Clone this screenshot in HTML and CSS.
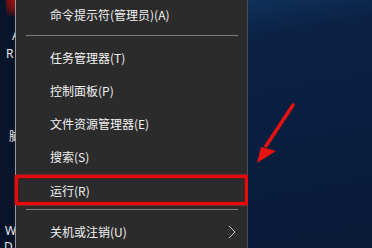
FILE: index.html
```html
<!DOCTYPE html>
<html lang="zh-CN">
<head>
  <meta charset="UTF-8" />
  <meta name="viewport" content="width=device-width, initial-scale=1.0"/>
  <title>Win+X</title>
  <link rel="stylesheet" href="styles.css">
</head>

<body>
  <div class="screen">
    <div class="desk-left">
      <span class="glow"></span>
      <span class="lbl l1">A</span>
      <span class="lbl l2">R</span>
      <span class="lbl l3">脑</span>
      <span class="lbl l4">W</span>
      <span class="lbl l5">D</span>
    </div>

    <ul class="menu">
      <li class="item first">命令提示符(管理员)(A)</li>
      <li class="sep"></li>
      <li class="item">任务管理器(T)</li>
      <li class="item">控制面板(P)</li>
      <li class="item">文件资源管理器(E)</li>
      <li class="item">搜索(S)</li>
      <li class="item run">运行(R)</li>
      <li class="sep sep2"></li>
      <li class="item sub">关机或注销(U)
        <svg class="chev" width="8" height="14" viewBox="0 0 8 14">
          <path d="M1 1 L7 7 L1 13" fill="none" stroke="#cfcfcf" stroke-width="1"/>
        </svg>
      </li>
    </ul>

    <div class="desk-right">
      <svg class="arrow" width="45" height="80" viewBox="0 0 45 80">
        <line x1="36" y1="15" x2="9" y2="56" stroke="#e5120f" stroke-width="3.5" stroke-linecap="round"/>
        <polygon points="0,73 4,57 19,61" fill="#e5120f"/>
      </svg>
    </div>
  </div>
</body>
</html>
```

FILE: styles.css
```css
* {
  box-sizing: border-box;
}

body {
  margin: 0;
  padding: 0;
  background: #081a36;
  font-family: "Noto Sans CJK SC", "Noto Sans", sans-serif;
}

.screen {
  width: 372px;
  height: 248px;
  display: flex;
  overflow: hidden;
}

.desk-left {
  position: relative;
  width: 15px;
  flex: none;
  background: #08142a;
  overflow: hidden;
}

.glow {
  position: absolute;
  top: 0;
  left: 6px;
  width: 12px;
  height: 16px;
  background: radial-gradient(circle at 100% 0, #b01818 0, #701010 50%, rgba(8, 20, 42, 0) 100%);
}

.lbl {
  position: absolute;
  color: #e8e8e8;
  font-family: "Noto Sans", sans-serif;
  font-size: 12px;
  line-height: 13px;
}

.l1 { left: 12px; top: 29px; }
.l2 { left: 6px; top: 47px; }
.l3 { left: 9px; top: 129px; font-family: "Noto Sans CJK SC", sans-serif; }
.l4 { left: 5px; top: 224px; }
.l5 { left: 4px; top: 240px; }

.menu {
  width: 233px;
  flex: none;
  margin: 0;
  padding: 0;
  list-style: none;
  background: #2b2b2b;
  border-left: 1px solid #9a9a9a;
  border-right: 1px solid #4a4a4a;
}

.item {
  position: relative;
  height: 33px;
  display: flex;
  align-items: center;
  padding-left: 34px;
  color: #f2f2f2;
  font-size: 12px;
}

.item.first {
  height: 29px;
}

.sep {
  height: 12px;
  display: flex;
  align-items: center;
  padding: 0 9px 0 10px;
}

.sep::before {
  content: "";
  flex: 1;
  height: 1px;
  background: #7d7d7d;
}

.sep2 {
  height: 8px;
}

.run {
  height: 30px;
  margin: 2px 0 0;
}

.run::after {
  content: "";
  position: absolute;
  top: 0;
  left: -1px;
  right: -1px;
  bottom: 0;
  border: 3px solid #e30b0b;
  box-shadow: 0 0 2px #ff2a2a, inset 0 0 2px #a00;
}

.sub {
  height: 36px;
}

.chev {
  position: absolute;
  right: 11px;
  top: 12px;
}

.desk-right {
  position: relative;
  flex: 1;
  background: linear-gradient(170deg, #10305a 0, #0b2244 14%, #0a1f40 45%, #071a36 100%);
}

.arrow {
  position: absolute;
  left: 9px;
  top: 90px;
}
```
